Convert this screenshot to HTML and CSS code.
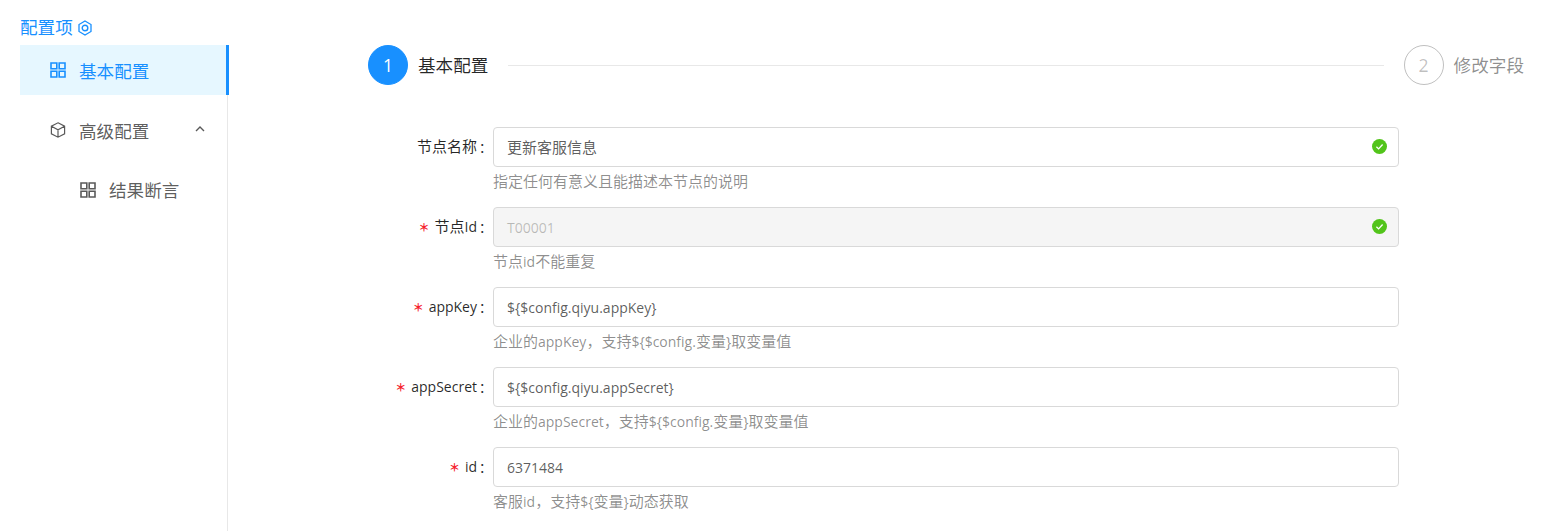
FILE: index.html
```html
<!DOCTYPE html>
<html lang="en">
<head>
  <meta charset="UTF-8" />
  <meta name="viewport" content="width=device-width, initial-scale=1.0" />
  <title>配置项</title>
  <link rel="stylesheet" href="styles.css">
</head>
<body>
  <div class="page">
    <aside class="side">
      <div class="side-title">配置项
        <svg class="title-icon" viewBox="0 0 16 16" width="16" height="16"><path d="M8 1l6 3.5v7L8 15l-6-3.5v-7z" fill="none" stroke="currentColor" stroke-width="1.3"/><circle cx="8" cy="8" r="2.8" fill="none" stroke="currentColor" stroke-width="1.4"/></svg>
      </div>
      <ul class="menu">
        <li class="menu-item active">
          <svg class="menu-icon" viewBox="0 0 16 16"><path d="M1 1h5.8v5.8h-5.8zM9.2 1h5.8v5.8h-5.8zM1 9.2h5.8v5.8h-5.8zM9.2 9.2h5.8v5.8h-5.8z" fill="none" stroke="currentColor" stroke-width="1.6"/></svg>
          <span>基本配置</span>
        </li>
        <li class="menu-item">
          <svg class="menu-icon" viewBox="0 0 16 16"><path d="M8 .8l6.6 3.4v7.6L8 15.2l-6.6-3.4V4.2zM1.4 4.2L8 7.7l6.6-3.5M8 7.7v7.5" fill="none" stroke="currentColor" stroke-width="1.2"/></svg>
          <span>高级配置</span>
          <svg class="arrow" viewBox="0 0 10 6" width="10" height="6"><path d="M1 5l4-4 4 4" fill="none" stroke="currentColor" stroke-width="1.4"/></svg>
        </li>
        <li class="menu-item sub">
          <svg class="menu-icon" viewBox="0 0 16 16"><path d="M1 1h5.8v5.8h-5.8zM9.2 1h5.8v5.8h-5.8zM1 9.2h5.8v5.8h-5.8zM9.2 9.2h5.8v5.8h-5.8z" fill="none" stroke="currentColor" stroke-width="1.6"/></svg>
          <span>结果断言</span>
        </li>
      </ul>
    </aside>

    <main class="main">
      <div class="steps">
        <div class="step-circle current">1</div>
        <div class="step-title current-title">基本配置</div>
        <div class="step-line"></div>
        <div class="step-circle">2</div>
        <div class="step-title">修改字段</div>
      </div>

      <form class="form">
        <div class="row">
          <label class="label">节点名称</label>
          <div class="control">
            <div class="input">更新客服信息
              <svg class="ok" viewBox="0 0 15 15" width="15" height="15"><circle cx="7.5" cy="7.5" r="7.5" fill="#52c41a"/><path d="M4.4 7.7l2.2 2.2 4-4.4" fill="none" stroke="#fff" stroke-width="1.3"/></svg>
            </div>
            <div class="help">指定任何有意义且能描述本节点的说明</div>
          </div>
        </div>
        <div class="row">
          <label class="label required">节点<span class="en">Id</span></label>
          <div class="control">
            <div class="input disabled"><span class="en">T00001</span>
              <svg class="ok" viewBox="0 0 15 15" width="15" height="15"><circle cx="7.5" cy="7.5" r="7.5" fill="#52c41a"/><path d="M4.4 7.7l2.2 2.2 4-4.4" fill="none" stroke="#fff" stroke-width="1.3"/></svg>
            </div>
            <div class="help">节点<span class="en">id</span>不能重复</div>
          </div>
        </div>
        <div class="row">
          <label class="label required"><span class="en">appKey</span></label>
          <div class="control">
            <div class="input"><span class="en">${$config.qiyu.appKey}</span></div>
            <div class="help">企业的<span class="en">appKey</span>，支持<span class="en">${$config.</span>变量<span class="en">}</span>取变量值</div>
          </div>
        </div>
        <div class="row">
          <label class="label required"><span class="en">appSecret</span></label>
          <div class="control">
            <div class="input"><span class="en">${$config.qiyu.appSecret}</span></div>
            <div class="help">企业的<span class="en">appSecret</span>，支持<span class="en">${$config.</span>变量<span class="en">}</span>取变量值</div>
          </div>
        </div>
        <div class="row">
          <label class="label required"><span class="en">id</span></label>
          <div class="control">
            <div class="input"><span class="en">6371484</span></div>
            <div class="help">客服<span class="en">id</span>，支持<span class="en">${</span>变量<span class="en">}</span>动态获取</div>
          </div>
        </div>
      </form>
    </main>
  </div>
</body>
</html>
```

FILE: styles.css
```css
:root {
  --primary-color: #1890ff;
  --text-color: rgba(0,0,0,0.65);
  --help-color: rgba(0,0,0,0.45);
  --border-color: #d9d9d9;
}
* { box-sizing: border-box; }
html, body {
  height: 100%;
  overflow: hidden;
}
body {
  margin: 0;
  font-family: "Open Sans", "Noto Sans CJK SC", sans-serif;
  font-size: 15px;
  color: var(--text-color);
  background: #fff;
}
.en { font-size: 14px; }
.page {
  display: flex;
  height: 531px;
  padding-left: 20px;
}

/* sidebar */
.side {
  width: 209px;
  flex: none;
}
.side-title {
  display: flex;
  align-items: center;
  gap: 4px;
  height: 45px;
  padding-top: 8px;
  font-size: 17.6px;
  color: var(--primary-color);
}
.title-icon { margin-top: 3px; }
.menu {
  list-style: none;
  margin: 0 1px 0 0;
  padding: 0;
  height: 486px;
  border-right: 1px solid #e8e8e8;
}
.menu-item {
  display: flex;
  align-items: center;
  height: 50px;
  margin-bottom: 10px;
  margin-right: -2px;
  padding-left: 30px;
  font-size: 17.6px;
}
.menu-item.active {
  background: #e6f7ff;
  color: var(--primary-color);
  border-right: 3px solid var(--primary-color);
}
.menu-item.sub { padding-left: 60px; }
.menu-item.sub span { margin-top: -2px; }
.menu-icon {
  width: 16px;
  height: 16px;
  margin-right: 13px;
  flex: none;
}
.arrow { margin-left: 46px; margin-top: -2px; }

/* steps */
.main {
  flex: 1;
  min-width: 0;
  padding: 45px 20px 0 139px;
}
.steps {
  display: flex;
  align-items: center;
  height: 40px;
}
.step-circle {
  width: 40px;
  height: 40px;
  flex: none;
  display: flex;
  align-items: center;
  justify-content: center;
  border: 1px solid rgba(0,0,0,0.25);
  border-radius: 50%;
  font-size: 17.6px;
  color: rgba(0,0,0,0.25);
}
.step-circle.current {
  background: var(--primary-color);
  border-color: var(--primary-color);
  color: #fff;
}
.step-title {
  margin: -2px 0 0 10px;
  font-size: 17.6px;
  color: var(--help-color);
  white-space: nowrap;
}
.current-title { color: rgba(0,0,0,0.85); }
.step-line {
  flex: 1;
  height: 1px;
  margin: 0 20px 0 20px;
  background: #e8e8e8;
}

/* form */
.form { padding-top: 42px; }
.row {
  display: flex;
  height: 80px;
}
.label {
  width: 125px;
  flex: none;
  padding-right: 5px;
  height: 40px;
  line-height: 38px;
  text-align: right;
  color: rgba(0,0,0,0.85);
  white-space: nowrap;
}
.label::after {
  content: "：";
  display: inline-block;
  width: 9px;
  margin-left: 2px;
  text-align: left;
  font-size: 13px;
}
.label.required::before {
  content: "＊";
  display: inline-block;
  margin-right: 5px;
  font-size: 11px;
  font-weight: 700;
  color: #f5222d;
}
.control { width: 906px; flex: none; }
.input {
  position: relative;
  height: 40px;
  line-height: 38px;
  padding: 0 13px;
  border: 1px solid var(--border-color);
  border-radius: 4px;
  background: #fff;
}
.input.disabled {
  background: #f5f5f5;
  color: rgba(0,0,0,0.25);
}
.ok {
  position: absolute;
  top: 11px;
  right: 11px;
}
.help {
  margin-top: 3px;
  line-height: 22px;
  color: var(--help-color);
  white-space: nowrap;
}
```
